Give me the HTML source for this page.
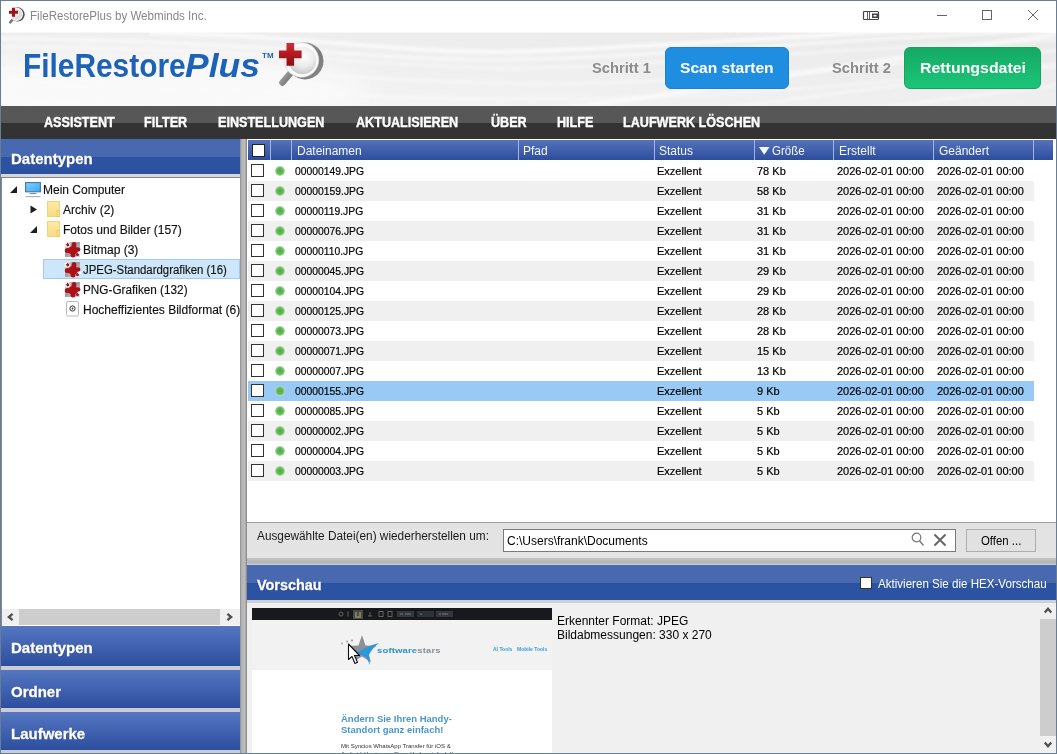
<!DOCTYPE html>
<html><head><meta charset="utf-8">
<style>
*{margin:0;padding:0;box-sizing:border-box}
html,body{width:1057px;height:754px;overflow:hidden;background:#f0f0f0;font-family:"Liberation Sans",sans-serif}
body{-webkit-font-smoothing:antialiased}
#root{position:absolute;left:0;top:0;width:1057px;height:754px;will-change:transform}
.a{position:absolute}
.nw{white-space:nowrap}
#title{left:0;top:0;width:1057px;height:31px;background:#fff}
#banner{left:0;top:31px;width:1057px;height:75px;background:#ececec;overflow:hidden}
#menu{left:0;top:106px;width:1057px;height:33px;background:linear-gradient(#575757 0,#575757 52%,#333 52%,#333 100%)}
#menu span{position:absolute;top:8px;-webkit-text-stroke:.35px #fff;color:#fff;font-weight:bold;font-size:14px;white-space:nowrap;transform:scaleX(0.9);transform-origin:0 0}
.bh{background:linear-gradient(#4868b0 0,#4868b0 52%,#2c52a2 52%,#2c52a2 100%)}
.acc{position:absolute;left:1px;width:240px;height:40px;background:linear-gradient(#5676c0 0%,#4264b2 45%,#2c4e9e 100%)}
.acc span{position:absolute;left:10px;top:13px;color:#fff;font-weight:bold;font-size:15px;white-space:nowrap;-webkit-text-stroke:.3px #fff;text-shadow:0 0 1px rgba(0,0,30,.6)}
.bd{position:absolute;background:#6a7e93}
.tr{position:absolute;height:20px;font-size:12px;color:#111;white-space:nowrap;-webkit-text-stroke:.15px #111}
.tr span{position:absolute;top:4px}
.gh{position:absolute;top:140px;height:20px;background:linear-gradient(#5572ba,#2d4d9d)}
.gh span{position:absolute;top:4px;font-size:12px;color:#f4f8ff;white-space:nowrap}
.sep{position:absolute;top:140px;width:1px;height:20px;background:#9fb5e6}
.row{position:absolute;left:248px;width:786px;height:20px;font-size:11px;color:#000;white-space:nowrap;-webkit-text-stroke:.2px #000}
.row.g{background:#f0f0f0}
.row.s{background:#99c9f5}
.row .cb{position:absolute;left:3px;top:3px;width:13px;height:13px;border:1px solid #333;background:#fff}
.row .dot{position:absolute;left:27px;top:5px;width:10px;height:10px;border-radius:50%;background:radial-gradient(circle closest-side,#55af4b 0,#5cb552 50%,#80c876 78%,#b8e4b0 100%)}
.row span{position:absolute;top:4px}
.c1{left:47px;transform:scaleX(.94);transform-origin:0 0}
.c2{left:409px}
.c3{left:509px}
.c4{left:589px}
.c5{left:689px}
</style></head><body><div id="root">
 <div id="title" class="a">
  <svg class="a" style="left:0;top:0" width="32" height="30" viewBox="0 0 32 30">
   <path d="M10.2 22.3 L14.5 17.3" stroke="#7a7a7a" stroke-width="2.6" stroke-linecap="round"/>
   <circle cx="17.6" cy="14.4" r="7.1" fill="#4a4a4a"/>
   <circle cx="16.4" cy="14.2" r="6.7" fill="#f4f4f4"/>
   <circle cx="16.8" cy="14.4" r="5.2" fill="#dcdcdc"/>
   <circle cx="16.2" cy="13.4" r="3" fill="#f0f0f0"/>
   <path d="M12 7.7h3v3h3v3h-3v3h-3v-3h-3v-3h3z" fill="#9c1418"/>
  </svg>
  <div class="a nw" style="left:30px;top:9px;font-size:12px;color:#888;transform:scaleX(.965);transform-origin:0 0">FileRestorePlus by Webminds Inc.</div>
  <!-- window controls -->
  <svg class="a" style="left:862px;top:10px" width="20" height="12" viewBox="0 0 20 12">
   <rect x="1.5" y="1.5" width="15" height="8" rx="1" fill="#fff" stroke="#444" stroke-width="1.2"/>
   <rect x="10" y="3.5" width="6" height="4.5" fill="#444"/>
   <rect x="11.5" y="5" width="3" height="1.5" fill="#fff"/>
   <path d="M5.5 2v7M7.5 2v7" stroke="#333" stroke-width=".8"/>
  </svg>
  <div class="a" style="left:937px;top:15px;width:10px;height:1px;background:#666"></div>
  <div class="a" style="left:982px;top:10px;width:10px;height:10px;border:1px solid #666"></div>
  <svg class="a" style="left:1027px;top:9px" width="12" height="12" viewBox="0 0 12 12"><path d="M1 1L11 11M11 1L1 11" stroke="#666" stroke-width="1"/></svg>
 </div>
 <div id="banner" class="a">
  <svg class="a" style="left:0;top:0" width="1057" height="75" viewBox="0 0 1057 75">
   <defs>
    <filter id="bl" x="-10%" y="-100%" width="120%" height="300%"><feGaussianBlur stdDeviation="1.8"/></filter>
    <filter id="bl2" x="-50%" y="-100%" width="200%" height="300%"><feGaussianBlur stdDeviation="12"/></filter>
    <linearGradient id="bg" x1="0" y1="1" x2="1" y2="0"><stop offset="0" stop-color="#f6f6f6"/><stop offset=".45" stop-color="#efefef"/><stop offset="1" stop-color="#e9e9e9"/></linearGradient>
   </defs>
   <rect x="0" y="0" width="1057" height="75" fill="url(#bg)"/>
   <ellipse cx="150" cy="60" rx="220" ry="35" fill="#fafafa" filter="url(#bl2)" opacity=".9"/>
   <g filter="url(#bl)" fill="none" stroke="#fcfcfc">
    <path d="M150 2 C 300 4, 400 22, 500 21 S 800 4 1080 -10" stroke-width="4" opacity=".9"/>
    <path d="M0 8 C 200 6, 380 30, 500 29 S 800 10 1080 -2" stroke-width="3" opacity=".75"/>
    <path d="M0 16 C 220 14, 400 38, 520 37 S 820 18 1080 8" stroke-width="2.5" opacity=".6"/>
    <path d="M0 38 C 250 30, 420 58, 600 52 S 900 30 1080 18" stroke-width="3" opacity=".55"/>
    <path d="M0 58 C 250 52, 420 76, 650 66 S 950 42 1080 35" stroke-width="3" opacity=".5"/>
    <path d="M560 78 C 720 58, 880 28, 1080 0" stroke-width="5" opacity=".7"/>
    <path d="M700 80 C 850 62, 960 45, 1080 30" stroke-width="3" opacity=".55"/>
    <path d="M820 85 C 920 72, 1000 60, 1080 52" stroke-width="4" opacity=".5"/>
   </g>
   <rect x="0" y="0" width="1057" height="1.5" fill="#fff"/>
  </svg>
  <div class="a nw" style="left:23px;top:16px;font-size:33px;font-weight:bold;color:#1c62b9;transform:scaleX(.905);transform-origin:0 0;letter-spacing:0">FileRestore</div>
  <div class="a nw" style="left:184.5px;top:16px;font-size:33px;font-weight:bold;font-style:italic;color:#1c62b9;transform:scaleX(1.075);transform-origin:0 0">Plus</div>
  <div class="a nw" style="left:262px;top:20px;font-size:8px;font-weight:bold;color:#1c62b9">TM</div>
  <svg class="a" style="left:270px;top:5px" width="64" height="56" viewBox="0 0 64 56">
   <defs>
    <radialGradient id="lens" cx="55%" cy="35%" r="65%"><stop offset="0" stop-color="#fdfdfd"/><stop offset=".55" stop-color="#ededed"/><stop offset="1" stop-color="#c9c9c9"/></radialGradient>
    <linearGradient id="red" x1="0" y1="0" x2="0" y2="1"><stop offset="0" stop-color="#cf3036"/><stop offset=".5" stop-color="#b3181e"/><stop offset="1" stop-color="#861014"/></linearGradient>
    <linearGradient id="cres" x1="0" y1="0" x2="1" y2="1"><stop offset="0" stop-color="#b0b0b0"/><stop offset=".6" stop-color="#7a7a7a"/><stop offset="1" stop-color="#8a8a8a"/></linearGradient>
    <linearGradient id="hdl" x1="0" y1="0" x2="1" y2="1"><stop offset="0" stop-color="#a8a8a8"/><stop offset="1" stop-color="#6e6e6e"/></linearGradient>
   </defs>
   <path d="M12.5 46.5 L21 36.5" stroke="url(#hdl)" stroke-width="6.5" stroke-linecap="round"/>
   <circle cx="35" cy="25" r="18.5" fill="url(#cres)"/>
   <circle cx="31.5" cy="24" r="17.3" fill="#fbfbfb" stroke="#d0d0d0" stroke-width=".6"/>
   <circle cx="32.5" cy="24.5" r="13.8" fill="url(#lens)"/>
   <path d="M16.5 7h7.6v7.5h7.5v7.8h-7.5v7.4h-7.6v-7.4h-7.5v-7.8h7.5z" fill="url(#red)"/>
  </svg>
  <div class="a nw" style="left:592px;top:29px;font-size:14px;font-weight:bold;color:#8c8c8c;transform:scaleX(1.05);transform-origin:0 0">Schritt 1</div>
  <div class="a" style="left:665px;top:16px;width:124px;height:42px;border-radius:6px;background:#1f8ee0;border:1px solid #1a82d0"></div>
  <div class="a nw" style="left:680px;top:28px;font-size:15px;font-weight:bold;color:#fff;transform:scaleX(1.04);transform-origin:0 0">Scan starten</div>
  <div class="a nw" style="left:832px;top:29px;font-size:14px;font-weight:bold;color:#8c8c8c;transform:scaleX(1.05);transform-origin:0 0">Schritt 2</div>
  <div class="a" style="left:904px;top:16px;width:137px;height:42px;border-radius:6px;background:linear-gradient(#15aa65,#1bc578);border:1px solid #14a462"></div>
  <div class="a nw" style="left:920px;top:28px;font-size:15px;font-weight:bold;color:#fff;transform:scaleX(1.06);transform-origin:0 0">Rettungsdatei</div>
 </div>
 <div id="menu" class="a">
  <span style="left:44px">ASSISTENT</span>
  <span style="left:144px">FILTER</span>
  <span style="left:218px">EINSTELLUNGEN</span>
  <span style="left:356px">AKTUALISIEREN</span>
  <span style="left:491px">ÜBER</span>
  <span style="left:557px">HILFE</span>
  <span style="left:623px">LAUFWERK LÖSCHEN</span>
 </div>

 <!-- LEFT PANEL -->
 <div class="a bh" style="left:1px;top:139px;width:240px;height:35px"></div>
 <div class="a nw" style="left:11px;top:150px;font-size:15px;font-weight:bold;color:#fff;-webkit-text-stroke:.3px #fff;text-shadow:0 0 1px rgba(0,0,30,.6)">Datentypen</div>
 <div class="a" style="left:1px;top:174px;width:240px;height:3px;background:#d6d6d6"></div>
 <div class="a" style="left:1px;top:177px;width:240px;height:449px;background:#fff;border-left:1px solid #828790;border-top:1px solid #828790"></div>
 <!-- tree -->
 <svg class="a" style="left:10px;top:186px" width="8" height="8" viewBox="0 0 8 8"><path d="M7 0V7H0z" fill="#1e1e1e"/></svg>
 <svg class="a" style="left:25px;top:182px" width="16" height="16" viewBox="0 0 16 16">
  <defs><linearGradient id="scr" x1="0" y1="0" x2="1" y2="1"><stop offset="0" stop-color="#8ad0fc"/><stop offset="1" stop-color="#38a8f2"/></linearGradient></defs>
  <rect x="0.6" y="0.6" width="14.8" height="9.2" fill="url(#scr)" stroke="#3a78ae" stroke-width="1.1"/>
  <rect x="7" y="10.2" width="2" height="1" fill="#a8c8e6"/>
  <rect x="4.5" y="11.2" width="7" height="0.9" fill="#6a7480"/>
  <rect x="0.5" y="14" width="15" height="1.2" fill="#a9b0c0"/>
 </svg>
 <div class="tr" style="left:43px;top:179px"><span>Mein Computer</span></div>

 <svg class="a" style="left:30px;top:205px" width="8" height="9" viewBox="0 0 8 9"><path d="M0.5 0.5L7 4.5L0.5 8.5z" fill="#1e1e1e"/></svg>
 <svg class="a" style="left:47px;top:201px" width="14" height="16" viewBox="0 0 14 16">
  <defs><linearGradient id="fold" x1="0" y1="0" x2="0" y2="1"><stop offset="0" stop-color="#fdeaa8"/><stop offset="1" stop-color="#f9dc82"/></linearGradient></defs>
  <rect x="0.5" y="0.5" width="12" height="15" fill="url(#fold)" stroke="#efd27a" stroke-width="1"/>
  <rect x="10" y="9.5" width="2.5" height="6" fill="#fbe28e" stroke="#e9c966" stroke-width="1"/>
 </svg>
 <div class="tr" style="left:63px;top:199px"><span>Archiv (2)</span></div>

 <svg class="a" style="left:30px;top:226px" width="8" height="8" viewBox="0 0 8 8"><path d="M7 0V7H0z" fill="#1e1e1e"/></svg>
 <svg class="a" style="left:47px;top:221px" width="14" height="16" viewBox="0 0 14 16">
  <defs><linearGradient id="fold" x1="0" y1="0" x2="0" y2="1"><stop offset="0" stop-color="#fdeaa8"/><stop offset="1" stop-color="#f9dc82"/></linearGradient></defs>
  <rect x="0.5" y="0.5" width="12" height="15" fill="url(#fold)" stroke="#efd27a" stroke-width="1"/>
  <rect x="10" y="9.5" width="2.5" height="6" fill="#fbe28e" stroke="#e9c966" stroke-width="1"/>
 </svg>
 <div class="tr" style="left:63px;top:219px"><span>Fotos und Bilder (157)</span></div>

 <div class="a" style="left:43px;top:259px;width:197px;height:20px;background:#cde6fa;border:1px solid #a4c8ee"></div>
 <svg width="0" height="0" style="position:absolute">
  <defs>
   <linearGradient id="gsq" x1="0" y1="0" x2="1" y2="1"><stop offset="0" stop-color="#d8d8d8"/><stop offset=".45" stop-color="#9c9c9c"/><stop offset="1" stop-color="#e0e0e0"/></linearGradient>
   <g id="splat">
    <rect x="1" y="1" width="15" height="15" fill="url(#gsq)"/>
    <circle cx="3.5" cy="3.8" r="2.8" fill="#fff"/>
    <g fill="#ad1018">
     <circle cx="9" cy="9.5" r="4.6"/>
     <ellipse cx="10" cy="4" rx="2.4" ry="3"/>
     <ellipse cx="3.8" cy="9.5" rx="3" ry="2.6"/>
     <ellipse cx="9" cy="14.3" rx="2.4" ry="2.2"/>
     <ellipse cx="14" cy="8.5" rx="2.4" ry="2.3"/>
     <circle cx="13.5" cy="13.5" r="1.5"/>
    </g>
    <circle cx="15.6" cy="11.8" r="1.5" fill="#fff"/>
    <path d="M3.5 1.2l.7 1.6 1.6-.2-1 1.3.8 1.4-1.6-.4-1 1.2-.2-1.6-1.5-.6 1.4-.8z" fill="#b0141c"/>
   </g>
  </defs>
 </svg>
 <svg class="a" style="left:64px;top:241px" width="17" height="17"><use href="#splat"/></svg>
 <div class="tr" style="left:83px;top:239px"><span>Bitmap (3)</span></div>
 <svg class="a" style="left:64px;top:261px" width="17" height="17"><use href="#splat"/></svg>
 <div class="tr" style="left:83px;top:259px"><span style="transform:scaleX(.95);transform-origin:0 0">JPEG-Standardgrafiken (16)</span></div>
 <svg class="a" style="left:64px;top:281px" width="17" height="17"><use href="#splat"/></svg>
 <div class="tr" style="left:83px;top:279px"><span style="transform:scaleX(.98);transform-origin:0 0">PNG-Grafiken (132)</span></div>
 <svg class="a" style="left:66px;top:301px" width="14" height="16" viewBox="0 0 14 16">
  <rect x="0.5" y="0.5" width="12" height="14.5" rx="1.5" fill="#fff" stroke="#b8b8b8"/>
  <circle cx="6.5" cy="7.5" r="2.6" fill="none" stroke="#333" stroke-width="1"/>
  <circle cx="6.5" cy="7.5" r="0.9" fill="#333"/>
 </svg>
 <div class="tr" style="left:83px;top:299px"><span>Hocheffizientes Bildformat (6)</span></div>

 <!-- tree h-scrollbar -->
 <div class="a" style="left:2px;top:609px;width:238px;height:16px;background:#f0f0f0"></div>
 <div class="a" style="left:19px;top:609px;width:201px;height:16px;background:#cdcdcd"></div>
 <svg class="a" style="left:5px;top:612px" width="10" height="10" viewBox="0 0 10 10"><path d="M7.6 1.8L3.8 5L7.6 8.2" fill="none" stroke="#505050" stroke-width="2.3"/></svg>
 <svg class="a" style="left:225px;top:612px" width="10" height="10" viewBox="0 0 10 10"><path d="M2.4 1.8L6.2 5L2.4 8.2" fill="none" stroke="#505050" stroke-width="2.3"/></svg>

 <!-- accordions -->
 <div class="a" style="left:1px;top:626px;width:240px;height:127px;background:#c9ccd6"></div>
 <div class="acc" style="top:626px"><span>Datentypen</span></div>
 <div class="acc" style="top:670px;height:38px"><span style="top:12.5px">Ordner</span></div>
 <div class="acc" style="top:712px;height:38px"><span style="top:13px">Laufwerke</span></div>

 <!-- splitter -->
 <div class="a" style="left:240px;top:139px;width:7px;height:614px;background:linear-gradient(90deg,#8a8a8a 0,#b2b2b2 22%,#bdbdbd 62%,#a8a8a8 82%,#7c7c7c 100%)"></div>

 <!-- RIGHT PANEL: GRID -->
 <div class="a" style="left:247px;top:139px;width:809px;height:384px;background:#fff;border-bottom:1px solid #a0a0a0"></div>
 <div class="gh" style="left:248px;width:805px"></div>
 <div class="a" style="left:252px;top:144px;width:13px;height:13px;border:1px solid #222;background:#fff"></div>
 <div class="sep" style="left:270px"></div>
 <div class="sep" style="left:291px"></div>
 <div class="sep" style="left:518px"></div>
 <div class="sep" style="left:654px"></div>
 <div class="sep" style="left:754px"></div>
 <div class="sep" style="left:833px"></div>
 <div class="sep" style="left:933px"></div>
 <div class="sep" style="left:1033px"></div>
 <div class="gh" style="left:297px;background:none"><span>Dateinamen</span></div>
 <div class="gh" style="left:523px;background:none"><span>Pfad</span></div>
 <div class="gh" style="left:659px;background:none"><span>Status</span></div>
 <svg class="a" style="left:759px;top:147px" width="11" height="8" viewBox="0 0 11 8"><path d="M0 0H10.5L5.25 7.8z" fill="#f4f8ff"/></svg>
 <div class="gh" style="left:772px;background:none"><span style="transform:scaleX(.96);transform-origin:0 0">Größe</span></div>
 <div class="gh" style="left:839px;background:none"><span>Erstellt</span></div>
 <div class="gh" style="left:939px;background:none"><span>Geändert</span></div>

 <div class="row" style="top:161px"><div class="cb"></div><div class="dot"></div><span class="c1">00000149.JPG</span><span class="c2">Exzellent</span><span class="c3">78 Kb</span><span class="c4">2026-02-01 00:00</span><span class="c5">2026-02-01 00:00</span></div>
<div class="row g" style="top:181px"><div class="cb"></div><div class="dot"></div><span class="c1">00000159.JPG</span><span class="c2">Exzellent</span><span class="c3">58 Kb</span><span class="c4">2026-02-01 00:00</span><span class="c5">2026-02-01 00:00</span></div>
<div class="row" style="top:201px"><div class="cb"></div><div class="dot"></div><span class="c1">00000119.JPG</span><span class="c2">Exzellent</span><span class="c3">31 Kb</span><span class="c4">2026-02-01 00:00</span><span class="c5">2026-02-01 00:00</span></div>
<div class="row g" style="top:221px"><div class="cb"></div><div class="dot"></div><span class="c1">00000076.JPG</span><span class="c2">Exzellent</span><span class="c3">31 Kb</span><span class="c4">2026-02-01 00:00</span><span class="c5">2026-02-01 00:00</span></div>
<div class="row" style="top:241px"><div class="cb"></div><div class="dot"></div><span class="c1">00000110.JPG</span><span class="c2">Exzellent</span><span class="c3">31 Kb</span><span class="c4">2026-02-01 00:00</span><span class="c5">2026-02-01 00:00</span></div>
<div class="row g" style="top:261px"><div class="cb"></div><div class="dot"></div><span class="c1">00000045.JPG</span><span class="c2">Exzellent</span><span class="c3">29 Kb</span><span class="c4">2026-02-01 00:00</span><span class="c5">2026-02-01 00:00</span></div>
<div class="row" style="top:281px"><div class="cb"></div><div class="dot"></div><span class="c1">00000104.JPG</span><span class="c2">Exzellent</span><span class="c3">29 Kb</span><span class="c4">2026-02-01 00:00</span><span class="c5">2026-02-01 00:00</span></div>
<div class="row g" style="top:301px"><div class="cb"></div><div class="dot"></div><span class="c1">00000125.JPG</span><span class="c2">Exzellent</span><span class="c3">28 Kb</span><span class="c4">2026-02-01 00:00</span><span class="c5">2026-02-01 00:00</span></div>
<div class="row" style="top:321px"><div class="cb"></div><div class="dot"></div><span class="c1">00000073.JPG</span><span class="c2">Exzellent</span><span class="c3">28 Kb</span><span class="c4">2026-02-01 00:00</span><span class="c5">2026-02-01 00:00</span></div>
<div class="row g" style="top:341px"><div class="cb"></div><div class="dot"></div><span class="c1">00000071.JPG</span><span class="c2">Exzellent</span><span class="c3">15 Kb</span><span class="c4">2026-02-01 00:00</span><span class="c5">2026-02-01 00:00</span></div>
<div class="row" style="top:361px"><div class="cb"></div><div class="dot"></div><span class="c1">00000007.JPG</span><span class="c2">Exzellent</span><span class="c3">13 Kb</span><span class="c4">2026-02-01 00:00</span><span class="c5">2026-02-01 00:00</span></div>
<div class="row s" style="top:381px"><div class="cb"></div><div class="dot"></div><span class="c1">00000155.JPG</span><span class="c2">Exzellent</span><span class="c3">9 Kb</span><span class="c4">2026-02-01 00:00</span><span class="c5">2026-02-01 00:00</span></div>
<div class="row" style="top:401px"><div class="cb"></div><div class="dot"></div><span class="c1">00000085.JPG</span><span class="c2">Exzellent</span><span class="c3">5 Kb</span><span class="c4">2026-02-01 00:00</span><span class="c5">2026-02-01 00:00</span></div>
<div class="row g" style="top:421px"><div class="cb"></div><div class="dot"></div><span class="c1">00000002.JPG</span><span class="c2">Exzellent</span><span class="c3">5 Kb</span><span class="c4">2026-02-01 00:00</span><span class="c5">2026-02-01 00:00</span></div>
<div class="row" style="top:441px"><div class="cb"></div><div class="dot"></div><span class="c1">00000004.JPG</span><span class="c2">Exzellent</span><span class="c3">5 Kb</span><span class="c4">2026-02-01 00:00</span><span class="c5">2026-02-01 00:00</span></div>
<div class="row g" style="top:461px"><div class="cb"></div><div class="dot"></div><span class="c1">00000003.JPG</span><span class="c2">Exzellent</span><span class="c3">5 Kb</span><span class="c4">2026-02-01 00:00</span><span class="c5">2026-02-01 00:00</span></div>

 <!-- bottom bar -->
 <div class="a" style="left:247px;top:523px;width:809px;height:35px;background:#e3e3e3"></div>
 <div class="a nw" style="left:257px;top:529px;font-size:12px;color:#1a1a1a;transform:scaleX(.985);transform-origin:0 0">Ausgewählte Datei(en) wiederherstellen um:</div>
 <div class="a" style="left:503px;top:529px;width:453px;height:23px;background:#fff;border:1px solid #7a7a7a"></div>
 <div class="a nw" style="left:507px;top:534px;font-size:12px;color:#000">C:\Users\frank\Documents</div>
 <svg class="a" style="left:911px;top:532px" width="14" height="15" viewBox="0 0 14 15"><circle cx="5.5" cy="5.5" r="4.3" fill="none" stroke="#777" stroke-width="1.2"/><path d="M8.5 8.8L12.5 13.5" stroke="#777" stroke-width="1.4"/></svg>
 <svg class="a" style="left:933px;top:533px" width="14" height="14" viewBox="0 0 14 14"><path d="M1.5 1.5L12.5 12.5M12.5 1.5L1.5 12.5" stroke="#666" stroke-width="2"/></svg>
 <div class="a" style="left:966px;top:529px;width:70px;height:23px;background:#e1e1e1;border:1px solid #adadad"></div>
 <div class="a nw" style="left:981px;top:534px;font-size:12px;color:#000;transform:scaleX(.95);transform-origin:0 0">Offen ...</div>
 <div class="a" style="left:247px;top:558px;width:809px;height:7px;background:linear-gradient(#c4c4c4,#b4b4b4 70%,#c8d4ee)"></div>

 <!-- preview header -->
 <div class="a bh" style="left:247px;top:565px;width:809px;height:35px"></div>
 <div class="a nw" style="left:257px;top:575.5px;font-size:15px;font-weight:bold;color:#fff;transform:scaleX(.96);transform-origin:0 0;-webkit-text-stroke:.3px #fff;text-shadow:0 0 1px rgba(0,0,30,.6)">Vorschau</div>
 <div class="a" style="left:860px;top:577px;width:12px;height:12px;background:#fff;border:1px solid #333"></div>
 <div class="a nw" style="left:878px;top:577px;font-size:12px;color:#fff;transform:scaleX(.965);transform-origin:0 0">Aktivieren Sie die HEX-Vorschau</div>
 <div class="a" style="left:247px;top:600px;width:809px;height:3px;background:#d0d0d0"></div>
 <div class="a" style="left:247px;top:603px;width:809px;height:150px;background:#f0f0f0"></div>

 <!-- preview image -->
 <div class="a" style="left:252px;top:608px;width:300px;height:145px;background:#fff;overflow:hidden">
  <div class="a" style="left:0;top:0;width:300px;height:12px;background:#17191c"></div>
  <div class="a" style="left:0;top:12px;width:300px;height:50px;background:#f2f2f2"></div>
  <svg class="a" style="left:0;top:0" width="300" height="62" viewBox="0 0 300 62">
   <g fill="none" stroke="#6a6a6a" stroke-width=".9">
    <circle cx="89" cy="6" r="2"/><path d="M96 3.5v5"/><path d="M118 4v4M116 8h4"/><rect x="127" y="3.5" width="4" height="5"/><rect x="136" y="3.5" width="4" height="5"/>
   </g>
   <rect x="101" y="2" width="10" height="9" fill="#4a4a44"/>
   <path d="M103 9h6M104 4v4M108 4v4" stroke="#d8c888" stroke-width=".8"/>
   <rect x="145" y="3" width="17" height="6" fill="#34383d"/><rect x="165" y="3" width="17" height="6" fill="#2e3236"/><rect x="184" y="3" width="17" height="6" fill="#34383d"/>
   <path d="M148 6h3M168 6h2M187 6h2M153 6h6M190 6h6" stroke="#777" stroke-width="1"/>
   <!-- logo star -->
   <path d="M110 27 L113.5 37.5 L124 38 L116 44.5 L119 54 L110 48.5 L101 54 L104 44.5 L96 38 L106.5 37.5z" fill="#8d9097"/>
   <path d="M127 35 C 118 37, 108 42, 102 47 C 108 46, 112 47, 114 49 L 118 57 L 117 47 C 119 42, 123 38, 127 35z" fill="#2b98dc"/>
   <circle cx="90" cy="35.5" r="1" fill="#b0b0b0"/><circle cx="95" cy="33.5" r="1.1" fill="#a8a8a8"/><circle cx="100" cy="32.5" r="1.1" fill="#a0a0a0"/>
   <!-- cursor -->
   <path d="M96.5 36 L96.5 51.5 L100 48.5 L103 55.5 L105.5 54.3 L102.5 47.5 L107.5 47.5z" fill="#fff" stroke="#111" stroke-width="1.1" stroke-linejoin="round"/>
  </svg>
  <div class="a nw" style="left:125px;top:39px;font-size:7px;font-weight:bold;color:#2e90d2;transform:scaleX(1.36);transform-origin:0 0;letter-spacing:.1px">software<span style="color:#8a8f98">stars</span></div>
  <div class="a nw" style="left:241px;top:38px;font-size:5px;font-weight:bold;color:#3ba0dc">AI Tools</div>
  <div class="a nw" style="left:265px;top:38px;font-size:5px;font-weight:bold;color:#3ba0dc">Mobile Tools</div>
  <div class="a nw" style="left:89px;top:105px;font-size:9.5px;font-weight:bold;color:#4896cf;line-height:11px">Ändern Sie Ihren Handy-<br>Standort ganz einfach!</div>
  <div class="a nw" style="left:89px;top:134px;font-size:6px;color:#333;line-height:8px">Mit Syncios WhatsApp Transfer für iOS &amp;<br>Android übertragen Sie mühelos einfach Ihre</div>
 </div>
 <div class="a nw" style="left:557px;top:614px;font-size:12px;color:#000;line-height:14px">Erkennter Format: JPEG<br>Bildabmessungen: 330 x 270</div>
 <!-- v scrollbar -->
 <div class="a" style="left:1040px;top:603px;width:16px;height:150px;background:#f0f0f0"></div>
 <div class="a" style="left:1040px;top:619px;width:16px;height:117px;background:#cdcdcd"></div>
 <svg class="a" style="left:1043px;top:605px" width="10" height="10" viewBox="0 0 10 10"><path d="M1.8 7.6L5 3.8L8.2 7.6" fill="none" stroke="#505050" stroke-width="2.3"/></svg>
 <svg class="a" style="left:1043px;top:740px" width="10" height="10" viewBox="0 0 10 10"><path d="M1.8 2.4L5 6.2L8.2 2.4" fill="none" stroke="#505050" stroke-width="2.3"/></svg>

 <!-- window border -->
 <div class="bd" style="left:0;top:0;width:1057px;height:1px"></div>
 <div class="bd" style="left:0;top:0;width:1px;height:754px"></div>
 <div class="bd" style="left:1056px;top:0;width:1px;height:754px"></div>
 <div class="bd" style="left:0;top:753px;width:1057px;height:1px"></div>
</div></body></html>
